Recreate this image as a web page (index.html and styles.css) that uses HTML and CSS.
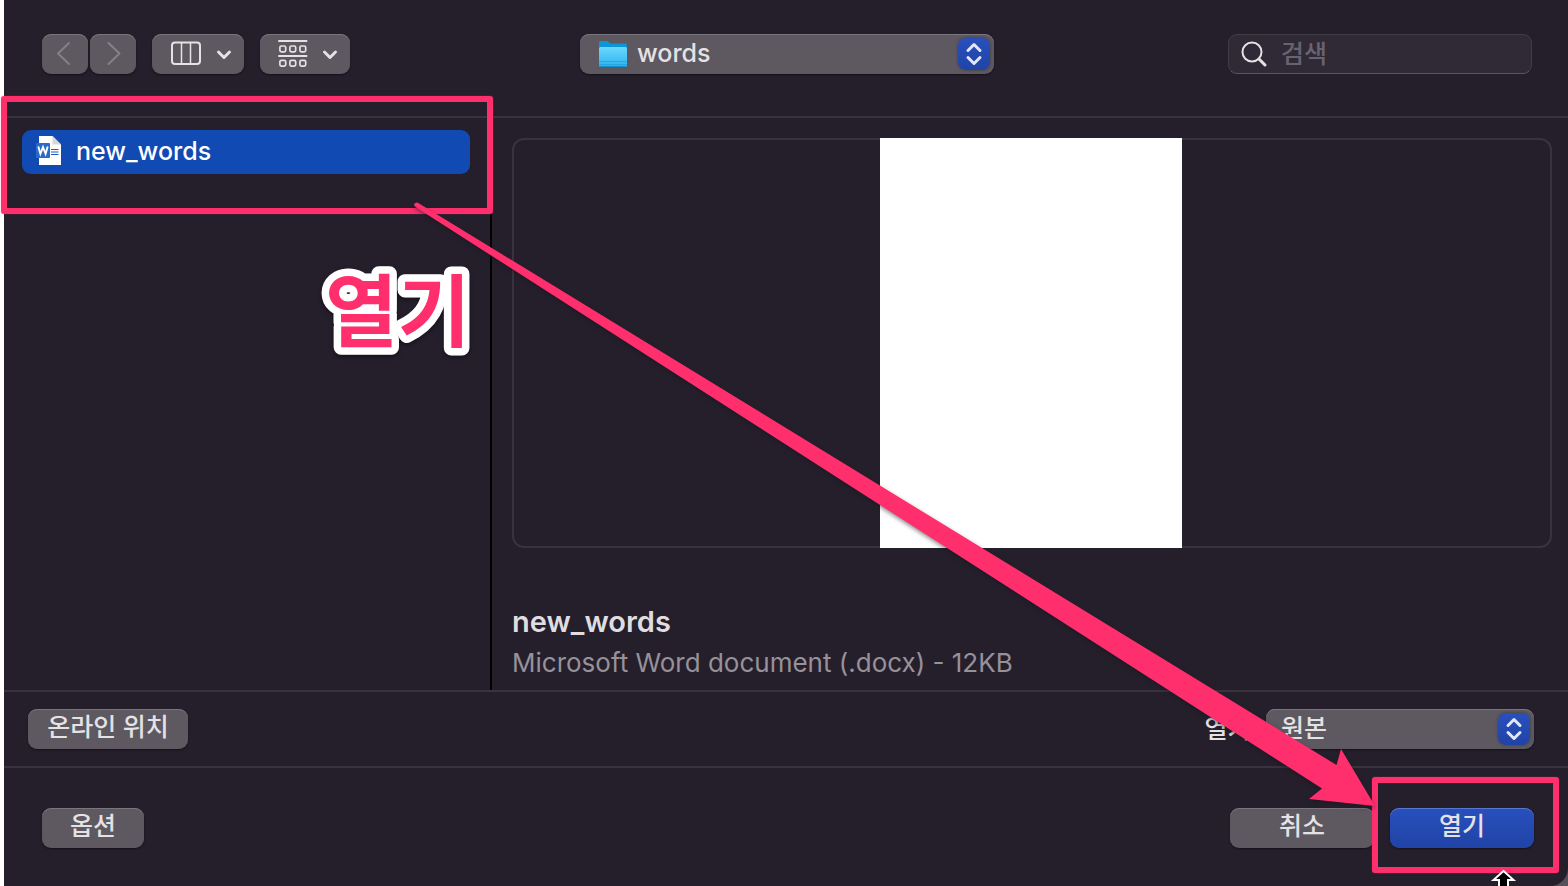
FILE: index.html
```html
<!DOCTYPE html>
<html lang="ko">
<head>
<meta charset="utf-8">
<title>열기</title>
<link rel="stylesheet" href="styles.css">
</head>
<body>
<main class="dialog">
  <header class="toolbar">
    <div class="tools">
      <div class="nav">
        <button class="btn nav-btn" aria-label="뒤로"><svg width="46" height="40" viewBox="0 0 46 40"><path d="M27 9 L16 19.500 L27 30"/></svg></button>
        <button class="btn nav-btn" aria-label="앞으로"><svg width="46" height="40" viewBox="0 0 46 40"><path d="M18.500 9 L29.500 19.500 L18.500 30"/></svg></button>
      </div>
      <button class="btn view-btn" aria-label="계층 보기"><svg width="92" height="40" viewBox="0 0 92 40"><rect x="20" y="8.500" width="28" height="21.500" rx="3"/><path d="M29.500 9V30M38.500 9V30" stroke-width="1.500"/><path class="chev" d="M66.500 18 L72 23.500 L77.500 18"/></svg></button>
      <button class="btn group-btn" aria-label="그룹"><svg width="90" height="40" viewBox="0 0 90 40"><path d="M19 7H46.500M19 22H46.500"/><g stroke-width="1.700"><rect x="19.900" y="12" width="5.800" height="5.800" rx="1.500"/><rect x="29.900" y="12" width="5.800" height="5.800" rx="1.500"/><rect x="39.900" y="12" width="5.800" height="5.800" rx="1.500"/><rect x="19.900" y="26.300" width="5.800" height="5.800" rx="1.500"/><rect x="29.900" y="26.300" width="5.800" height="5.800" rx="1.500"/><rect x="39.900" y="26.300" width="5.800" height="5.800" rx="1.500"/></g><path class="chev" d="M64.500 18 L70 23.500 L75.500 18"/></svg></button>
    </div>
    <div class="popup folder">
      <svg class="folder-icon" width="32" height="30" viewBox="0 0 32 30"><defs><linearGradient id="fg" x1="0" y1="0" x2="0" y2="1"><stop offset="0" stop-color="#6bd8fd"/><stop offset="1" stop-color="#2db2ee"/></linearGradient></defs><path d="M2 3.500Q2 2 3.500 2H10.500L13.500 4.500H28.500Q30 4.500 30 6V12H2Z" fill="#0c96d6"/><path d="M2 9.500Q2 8 3.500 8H28.500Q30 8 30 9.500V26.500Q30 28 28.500 28H3.500Q2 28 2 26.500Z" fill="url(#fg)"/><path d="M2 22.500H30M2 25.500H30" stroke="#1b9bd8" stroke-width=".6"/><path d="M2.500 27.500H29.500" stroke="#118cc4"/></svg>
      <select aria-label="폴더"><option>words</option></select>
      <span class="stepper"><svg width="32" height="32" viewBox="0 0 32 32"><path d="M10 12.500L16 6.500L22 12.500M10 19.500L16 25.500L22 19.500"/></svg></span>
    </div>
    <div class="search-area">
      <label class="search">
        <svg width="28" height="28" viewBox="0 0 28 28"><circle cx="12" cy="12" r="9.500"/><path d="M19 19L25 25" stroke-width="3"/></svg>
        <input type="search" placeholder="검색" aria-label="검색">
      </label>
    </div>
  </header>

  <section class="browser">
    <div class="files">
      <button class="file">
        <svg width="28" height="32" viewBox="0 0 28 32"><path d="M3 1H16.500L25 9.500V30H3Z" fill="#fff"/><path d="M16.500 1V9.500H25Z" fill="#d5d7dc"/><path d="M15 14.500H22.500M15 17H22.500M15 19.500H22.500" stroke="#1c5cbb" stroke-width="1.200"/><rect x="0" y="8" width="14" height="15" rx="1" fill="#2a6bc8"/><path d="M2.300 11.500L4.400 18.800L7 12.200L9.600 18.800L11.700 11.500" fill="none" stroke="#fff" stroke-width="1.900"/></svg>
        <span>new_words</span>
      </button>
      <div class="mark mark-file"></div>
      <svg class="callout" width="180" height="150" viewBox="0 0 180 150"><text x="15" y="107">열기</text></svg>
    </div>
    <div class="preview">
      <div class="frame"><div class="page"></div></div>
      <h1>new_words</h1>
      <p>Microsoft Word document (.docx) - 12KB</p>
    </div>
  </section>

  <section class="accessory">
    <button class="btn online">온라인 위치</button>
    <div class="open-as">
      <label for="mode">열기:</label>
      <div class="popup mode">
        <select id="mode"><option>원본</option></select>
        <span class="stepper"><svg width="32" height="32" viewBox="0 0 32 32"><path d="M10 12.500L16 6.500L22 12.500M10 19.500L16 25.500L22 19.500"/></svg></span>
      </div>
    </div>
  </section>

  <footer class="actions">
    <button class="btn options">옵션</button>
    <div class="confirm">
      <button class="btn action">취소</button>
      <div class="primary-wrap">
        <button class="btn action primary">열기</button>
        <div class="mark mark-open"></div>
      </div>
    </div>
  </footer>
</main>
<svg class="arrow" viewBox="0 0 1568 886" preserveAspectRatio="none" aria-hidden="true">
  <path class="pink" d="M417.500 202.500L1336.500 765L1341 749L1375 806L1309 799L1322 788.500L415.500 207Q412 203 417.500 202.500Z"/>
  <path class="cursor" d="M1503.500 871L1513.500 880H1508V892H1499V880H1493.500Z"/>
</svg>
</body>
</html>
```
FILE: styles.css
```css
* { box-sizing: border-box; }

body {
  margin: 0;
  min-height: 100vh;
  display: flex;
  position: relative;
  overflow: hidden;
  padding-left: 4px;
  background: linear-gradient(90deg, #fff 50%, #55505a 50%);
  color: #e4e2e5;
  font-family: Inter, "Noto Sans CJK KR", sans-serif;
  font-size: 25px;
}

button, select, input { font: inherit; color: inherit; border: 0; margin: 0; }

svg { display: block; flex: none; }

.dialog {
  flex: 1;
  display: flex;
  flex-direction: column;
  background: #251f2c;
  border-bottom-right-radius: 18px;
}

.btn {
  display: flex;
  align-items: center;
  justify-content: center;
  height: 40px;
  padding: 0 0 4px;
  border-radius: 9px;
  background: #5e5861;
  box-shadow: inset 0 1px #7b757d, 0 1px 2px #15111a;
  line-height: 36px;
  font-weight: 500;
}

.btn svg { fill: none; stroke: #e4e2e5; stroke-width: 2; stroke-linecap: round; stroke-linejoin: round; }
.btn .chev { stroke-width: 3; }

.toolbar {
  display: grid;
  grid-template-columns: 1fr 414px 1fr;
  align-items: center;
  height: 118px;
  padding: 0 36px 8px 38px;
  border-bottom: 2px solid #39333f;
}

.tools { display: flex; gap: 16px; }
.nav { display: flex; gap: 2px; }
.nav-btn, .view-btn, .group-btn { padding: 0; }
.btn.nav-btn svg { stroke: #858087; }

.popup {
  position: relative;
  height: 40px;
  border-radius: 9px;
  background: #5e5861;
  box-shadow: inset 0 1px #7b757d, 0 1px 2px #15111a;
}

.popup select {
  appearance: none;
  width: 100%;
  height: 38px;
  padding: 0 44px 0 15px;
  border-radius: 9px;
  background: transparent;
  font-weight: 500;
}

.popup.folder select { padding-left: 57px; }
.folder-icon { position: absolute; left: 17px; top: 5px; }

.stepper {
  position: absolute;
  right: 4px;
  top: 4px;
  border-radius: 8px;
  background: linear-gradient(#2850bd, #2043a6);
  box-shadow: 0 0 3px #3c3940;
  pointer-events: none;
}

.stepper svg { fill: none; stroke: #e3e7f5; stroke-width: 3; stroke-linecap: round; stroke-linejoin: round; }

.search-area { display: flex; justify-content: flex-end; }

.search {
  display: flex;
  align-items: center;
  gap: 13px;
  width: 304px;
  height: 40px;
  padding: 0 12px 0 11px;
  border: 1px solid #413b47;
  border-bottom-color: #5b5561;
  border-radius: 9px;
  background: #302a37;
}

.search svg { fill: none; stroke: #e4e2e5; stroke-width: 2; stroke-linecap: round; }
.search input { flex: 1; min-width: 0; height: 36px; padding: 0; background: transparent; outline: 0; font-weight: 500; }
.search input::placeholder { color: #696370; opacity: 1; }

.browser { flex: 1; display: flex; }

.files {
  position: relative;
  width: 488px;
  padding: 12px 20px 0 18px;
  border-right: 2px solid #000;
}

.file {
  display: flex;
  align-items: center;
  gap: 12px;
  width: 448px;
  height: 44px;
  padding: 0 14px 2px;
  border-radius: 9px;
  background: #114ab3;
  color: #fff;
  font-weight: 500;
}

.mark {
  position: absolute;
  border: 6px solid #ff2f6e;
  border-radius: 3px;
  box-shadow: 0 0 1px #ff2f6e;
  pointer-events: none;
}

.mark-file { left: -3px; right: -3px; top: -22px; height: 118px; }
.mark-open { left: -18px; right: -25px; top: -31px; bottom: -25px; }

.callout {
  position: absolute;
  right: 0;
  top: 116px;
  fill: #ff2f6e;
  stroke: #fff;
  stroke-width: 15px;
  stroke-linejoin: round;
  paint-order: stroke fill;
  font-family: "Noto Sans CJK KR", sans-serif;
  font-size: 79px;
  font-weight: 700;
  filter: drop-shadow(0 2px 2px #15111a);
}

.preview { flex: 1; padding: 20px 18px 0 20px; }

.frame {
  display: flex;
  justify-content: center;
  height: 410px;
  margin-right: -2px;
  padding-right: 2px;
  border-radius: 12px;
  box-shadow: inset 0 0 0 2px #39333f;
}

.page { width: 302px; background: #fff; }

.preview h1 { margin: 56px 0 0; font-size: 29px; line-height: 36px; font-weight: 600; color: #dfdde0; }
.preview p { margin: 6px 0 0; font-size: 26px; line-height: 34px; color: #979199; }

.accessory {
  display: flex;
  align-items: center;
  justify-content: space-between;
  height: 78px;
  padding: 0 34px 0 24px;
  border-top: 2px solid #39333f;
  border-bottom: 2px solid #39333f;
}

.online { width: 160px; }
.open-as { display: flex; align-items: center; gap: 8px; }
.open-as label { padding-bottom: 4px; font-weight: 500; }
.mode { width: 268px; }

.actions {
  display: flex;
  align-items: flex-start;
  justify-content: space-between;
  height: 118px;
  padding: 40px 34px 0 38px;
}

.options { width: 102px; }
.confirm { display: flex; gap: 16px; }
.action { width: 144px; }
.primary-wrap { position: relative; }

.primary {
  background: linear-gradient(#2850bd, #2043a6);
  box-shadow: inset 0 1px #5577cc, 0 1px 2px #15111a;
}

.arrow {
  position: absolute;
  left: 0;
  top: 0;
  width: 100%;
  height: 100%;
  pointer-events: none;
}

.pink { fill: #ff2f6e; filter: drop-shadow(0 2px 2px #15111a80); }
.cursor { fill: #000; stroke: #fff; stroke-width: 2; }
```
